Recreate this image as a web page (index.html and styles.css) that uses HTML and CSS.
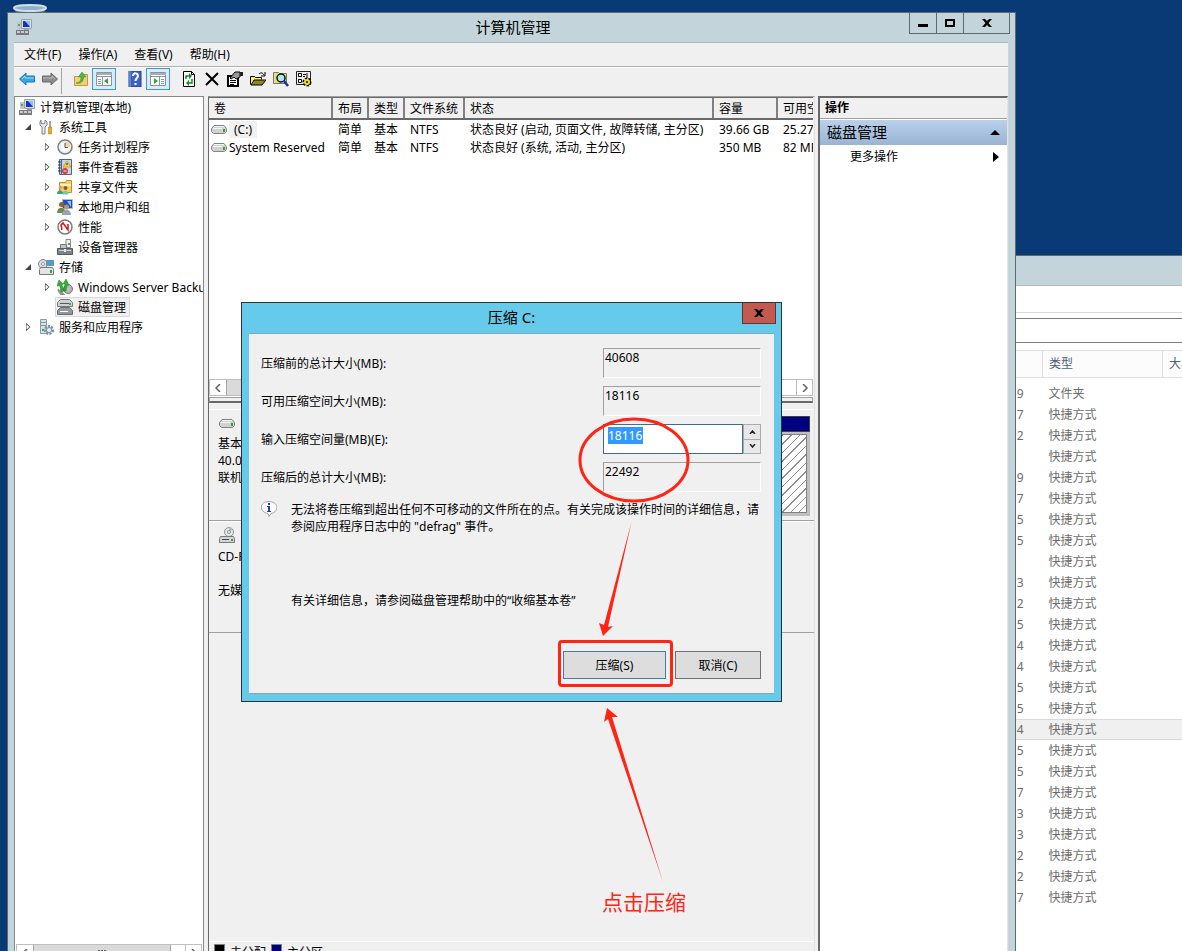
FILE: index.html
```
<!DOCTYPE html>
<html lang="zh-CN">

<head>
  <meta charset="UTF-8">
  <meta name="viewport" content="width=device-width, initial-scale=1.0">
  <title>计算机管理</title>
  <link rel="stylesheet" href="styles.css">
</head>

<body>
  <!-- shared icons -->
  <svg class="sprite" aria-hidden="true">
    <symbol id="i-computer" viewBox="0 0 16 16">
      <path d="M5 0h11v10H5z" fill="#d9dde2" />
      <path d="M5.500.5h10v9h-10z" fill="none" stroke="#9aa2aa" />
      <path d="M7 2h7v6H7z" fill="#1437b8" />
      <path d="M9 2h5v6z" fill="#8fc0f5" />
      <path d="M1 3h4v7H1z" fill="#c3c7cb" />
      <path d="M2 5h2v2H2z" fill="#37b34a" />
      <path d="M8 10h5v1H8z" fill="#9aa2aa" />
      <path d="M0 11h13v5H0z" fill="#77797c" />
      <path d="M1 12h3v2H1zM5 12h3v2H5zM9 12h3v2H9z" fill="#c9cbcd" />
    </symbol>
    <symbol id="i-tools" viewBox="0 0 16 16">
      <path d="M3 1v3l2 1 2-1V1l2 2v3L7 8v7H4V8L2 6V3z" fill="#e8eaec" stroke="#7c8085" />
      <path d="M12 2v6" stroke="#85898d" stroke-width="1.500" />
      <path d="M10.500 8h3v7h-3z" fill="#f1ad18" stroke="#a86c05" stroke-width=".5" />
    </symbol>
    <symbol id="i-clock" viewBox="0 0 16 16">
      <circle cx="8" cy="8" r="7" fill="#e7edf3" stroke="#7d8288" stroke-width="1.500" />
      <circle cx="8" cy="8" r="5" fill="#f8fafc" />
      <path d="M8 8V2.500A5.500 5.500 0 0 1 13.500 8z" fill="#f6d59b" />
      <path d="M8 4v4.500h3" fill="none" stroke="#555" />
    </symbol>
    <symbol id="i-event" viewBox="0 0 16 16">
      <path d="M2.500.5h12v15h-12z" fill="#c4d5ec" stroke="#4d6288" />
      <path d="M4.500 1v14" stroke="#4d6288" />
      <path d="M1 3h3M1 6h3M1 9h3M1 12h3" stroke="#333" />
      <path d="M10 2l4 6H6z" fill="#ffd21f" stroke="#a67d00" stroke-width=".5" />
      <path d="M10 4v2" stroke="#222" />
      <circle cx="8" cy="12" r="3" fill="#dc3b3b" />
      <path d="M6.500 12h3" stroke="#fff" />
    </symbol>
    <symbol id="i-share" viewBox="0 0 16 16">
      <path d="M2.500 3.500h6l1-2h5v12h-12z" fill="#f5cf68" stroke="#bd8f2a" />
      <path d="M3 5h11v2H3z" fill="#fff0b8" />
      <circle cx="3.500" cy="8.500" r="2" fill="#d8a177" />
      <circle cx="8.500" cy="9" r="2" fill="#8b5a33" />
      <path d="M0 15c0-5 6-5 6 0z" fill="#37a374" />
      <path d="M5.500 15.500c0-5 6-5 6 0z" fill="#78c4ae" />
    </symbol>
    <symbol id="i-users" viewBox="0 0 16 16">
      <path d="M5.500.5h10v9h-10z" fill="#1d50c8" stroke="#b4bcc4" />
      <path d="M10 2h4v6z" fill="#93c2f6" />
      <circle cx="4.500" cy="5.500" r="2.500" fill="#8a6534" />
      <circle cx="9.500" cy="8" r="2.500" fill="#c98f62" />
      <path d="M0 14c0-7 8-7 9 0z" fill="#6f8b4c" />
      <path d="M5 16c0-7 9-7 9 0z" fill="#8fa3c2" />
    </symbol>
    <symbol id="i-perf" viewBox="0 0 16 16">
      <circle cx="8" cy="8" r="7" fill="#fff" stroke="#77797b" stroke-width="1.500" />
      <path d="M5 11L4 6l2-2 5 7V5" fill="none" stroke="#d01818" stroke-width="1.500" />
    </symbol>
    <symbol id="i-device" viewBox="0 0 16 16">
      <path d="M9 .5h4.500v8H9z" fill="#eee" stroke="#888" />
      <path d="M11 4h2v2h-2z" fill="#38b44a" />
      <path d="M3.500 5.500h6v4h-6z" fill="#c0c4c8" stroke="#777" />
      <path d="M.5 9.500h15v6H.5z" fill="#7c8389" stroke="#565b60" />
      <path d="M2 11.500h12" stroke="#cfd3d6" />
      <path d="M7 10h2v3H7z" fill="#e8eaeb" />
    </symbol>
    <symbol id="i-storage" viewBox="0 0 16 16">
      <circle cx="5" cy="5" r="4.500" fill="#d8dcdf" stroke="#888" />
      <circle cx="5" cy="5" r="1.500" fill="#fff" stroke="#999" />
      <path d="M8.500 1.500h7v5h-7z" fill="#39a9dd" stroke="#7a8a92" />
      <path d="M2.500 8.500h12l1 2v5h-14v-5z" fill="#e2e4e6" stroke="#777" />
      <path d="M12 11h2v3h-2z" fill="#2faa35" />
    </symbol>
    <symbol id="i-backup" viewBox="0 0 16 16">
      <circle cx="11" cy="10" r="4.500" fill="#b9b4b9" stroke="#77727a" />
      <circle cx="11" cy="10" r="1.500" fill="#e7b5b0" />
      <path d="M1 10l4 3 3 3H4l-3-4z" fill="#999" stroke="#666" stroke-width=".5" />
      <path d="M4 13L3 7 0 7l2-6 4 4-1 1 2 6zM7 12L8 5H6l3-5 3 6h-2l-1 6z" fill="#34b233" stroke="#157a1a" stroke-width=".5" />
    </symbol>
    <symbol id="i-disks" viewBox="0 0 16 16">
      <path d="M3.500.5h9l3 3v4H.5v-4z" fill="#ced1d3" stroke="#77797b" />
      <path d="M3 4.500h9" stroke="#555" />
      <path d="M12 4h2v2h-2z" fill="#2fbe35" />
      <path d="M3.500 8.500h9l3 3v4H.5v-4z" fill="#95989a" stroke="#696b6d" />
      <path d="M3 12.500h8" stroke="#fff" />
    </symbol>
    <symbol id="i-services" viewBox="0 0 16 16">
      <path d="M2.500.5h6v14h-6z" fill="#d9e0e5" stroke="#8d989f" />
      <path d="M3 3.500h5M3 6.500h5" stroke="#8396a3" />
      <path d="M4 10h2v2H4z" fill="#35b13a" />
      <circle cx="11" cy="11" r="3.500" fill="none" stroke="#7992ab" stroke-width="3" stroke-dasharray="2 1" />
      <circle cx="11" cy="11" r="2.500" fill="#eef3f7" stroke="#7992ab" />
    </symbol>
    <symbol id="i-drive" viewBox="0 0 16 9">
      <path d="M3 .5h10l2.500 3v3l-2 2h-11l-2-2v-3z" fill="#cfd1d3" stroke="#808386" />
      <path d="M3 1.500h10M2 3.500h9" stroke="#f6f7f7" />
      <path d="M12 4h2v3h-2z" fill="#28a832" />
    </symbol>
    <symbol id="i-cd" viewBox="0 0 16 16">
      <circle cx="10" cy="5" r="4.500" fill="#e5e6e7" stroke="#8c8e90" />
      <path d="M10 0v5l4-3" fill="#b7bcc0" />
      <circle cx="10" cy="5" r="1.500" fill="#fff" stroke="#888" />
      <path d="M1.500 9.500h13l1 2v4H.5v-4z" fill="#d2d4d6" stroke="#77797b" />
      <path d="M3 12.500h7" stroke="#444" />
      <path d="M12 12h2v2h-2z" fill="#28a832" />
    </symbol>
    <symbol id="i-pane" viewBox="0 0 18 16">
      <path d="M1.500 1.500h15v13h-15z" fill="#fff" stroke="#8b949c" />
      <path d="M1 2h16v2H1z" fill="#a5adb5" />
      <path d="M1 5.500h16M7.500 6v8" stroke="#8b949c" />
      <path d="M3 8.500h3M3 10.500h3M3 12.500h3" stroke="#6c9fd2" />
      <path d="M13 7v6l-4-3z" fill="#31a536" />
    </symbol>
  </svg>

  <svg class="recycle-bin" viewBox="0 0 36 9" aria-hidden="true">
    <path d="M2 4l2 5h28l2-5z" fill="#547a9c" />
    <ellipse cx="18" cy="4" rx="16" ry="3" fill="#8fb0c8" stroke="#d4dee5" stroke-width="2" />
  </svg>

  <!-- file explorer behind -->
  <section class="explorer">
    <div class="explorer-title"></div>
    <div class="explorer-menu"></div>
    <div class="explorer-address"></div>
    <table class="explorer-files">
      <thead>
        <tr><th class="col-date"></th><th class="col-type">类型</th><th class="col-size">大小</th></tr>
      </thead>
      <tbody>
        <tr><td>9</td><td>文件夹</td><td></td></tr>
        <tr><td>7</td><td>快捷方式</td><td></td></tr>
        <tr><td>2</td><td>快捷方式</td><td></td></tr>
        <tr><td></td><td>快捷方式</td><td></td></tr>
        <tr><td>9</td><td>快捷方式</td><td></td></tr>
        <tr><td>7</td><td>快捷方式</td><td></td></tr>
        <tr><td>5</td><td>快捷方式</td><td></td></tr>
        <tr><td>5</td><td>快捷方式</td><td></td></tr>
        <tr><td></td><td>快捷方式</td><td></td></tr>
        <tr><td>3</td><td>快捷方式</td><td></td></tr>
        <tr><td>2</td><td>快捷方式</td><td></td></tr>
        <tr><td>5</td><td>快捷方式</td><td></td></tr>
        <tr><td>4</td><td>快捷方式</td><td></td></tr>
        <tr><td>4</td><td>快捷方式</td><td></td></tr>
        <tr><td>5</td><td>快捷方式</td><td></td></tr>
        <tr><td>5</td><td>快捷方式</td><td></td></tr>
        <tr class="active"><td>4</td><td>快捷方式</td><td></td></tr>
        <tr><td>5</td><td>快捷方式</td><td></td></tr>
        <tr><td>5</td><td>快捷方式</td><td></td></tr>
        <tr><td>7</td><td>快捷方式</td><td></td></tr>
        <tr><td>3</td><td>快捷方式</td><td></td></tr>
        <tr><td>3</td><td>快捷方式</td><td></td></tr>
        <tr><td>2</td><td>快捷方式</td><td></td></tr>
        <tr><td>2</td><td>快捷方式</td><td></td></tr>
        <tr><td>7</td><td>快捷方式</td><td></td></tr>
      </tbody>
    </table>
  </section>

  <!-- computer management -->
  <main class="manager">
    <header class="titlebar">
      <svg class="icon"><use href="#i-computer" /></svg>
      <h1>计算机管理</h1>
      <div class="window-controls">
        <button class="minimize" aria-label="最小化"><svg width="10" height="10"><path d="M0 6h10v3H0z" /></svg></button>
        <button class="maximize" aria-label="最大化"><svg width="10" height="10"><path d="M0 1h10v8H0zM2 3v4h6V3z" fill-rule="evenodd" /></svg></button>
        <button class="close" aria-label="关闭"><svg width="10" height="10"><path d="M0 1h3l2 2 2-2h3L6.500 5 10 9H7L5 7 3 9H0l3.500-4z" /></svg></button>
      </div>
    </header>
    <div class="manager-body">
      <nav class="menubar">
        <button>文件(F)</button>
        <button>操作(A)</button>
        <button>查看(V)</button>
        <button>帮助(H)</button>
      </nav>
      <div class="toolbar">
        <div class="tool-group">
          <button aria-label="后退"><svg viewBox="0 0 16 16"><path d="M.5 8L7 2v3h8.500v6H7v3z" fill="#35a7e3" stroke="#1876bd" /><path d="M3 8l3-3v2h9" fill="none" stroke="#9bdcf8" /></svg></button>
          <button aria-label="前进"><svg viewBox="0 0 16 16"><path d="M15.500 8L9 2v3H.5v6H9v3z" fill="#8d8d8d" stroke="#686868" /><path d="M1 7h9V5l3 3" fill="none" stroke="#bbb" /></svg></button>
        </div>
        <div class="tool-group">
          <button aria-label="向上"><svg viewBox="0 0 16 16"><path d="M1.500 5.500h5l1-2h7v11h-13z" fill="#f3d078" stroke="#c9983b" /><path d="M3 12c4 0 5-3 5-6H5.500L9 1l4 5h-2.500c0 5-3 7-7.500 6z" fill="#4bb944" stroke="#2b8930" stroke-width=".5" /></svg></button>
          <button class="pressed" aria-label="显示控制台树"><svg viewBox="0 0 18 16"><use href="#i-pane" /></svg></button>
        </div>
        <div class="tool-group">
          <button aria-label="帮助"><svg viewBox="0 0 16 16"><path d="M2 0h12v16H2z" fill="#3c62c5" stroke="#263f87" /><path d="M3 0v16" stroke="#8ba5e6" /><path d="M6 5c0-4 5-3 5 0 0 2-2.500 2-2.500 5M8.500 12v2" fill="none" stroke="#fff" stroke-width="2" /></svg></button>
          <button class="pressed" aria-label="显示操作窗格"><svg class="flip" viewBox="0 0 18 16"><use href="#i-pane" /></svg></button>
        </div>
        <div class="tool-group">
          <button aria-label="刷新"><svg viewBox="0 0 16 16"><path d="M2.500.5h8l3 3v12h-11z" fill="#fff" stroke="#000" /><path d="M10.500.5v3h3" fill="none" stroke="#000" /><path d="M5 8V5h4M11 8v4H7" fill="none" stroke="#108a28" stroke-width="1.500" /><path d="M8 2v6l3-3zM8 9v6l-3-3z" fill="#108a28" /></svg></button>
          <button aria-label="删除"><svg viewBox="0 0 16 16"><path d="M2 2l12 12M14 2L2 14" stroke="#000" stroke-width="2" /></svg></button>
          <button aria-label="属性"><svg viewBox="0 0 16 16"><path d="M1 5h10v10H1z" fill="#fff" stroke="#000" stroke-width="2" /><path d="M3 9.500h6M3 11.500h6M3 13.500h4" stroke="#000" /><path d="M3 7l5-6h5v5L9 8 7 6 4 8z" fill="#999" stroke="#000" /><path d="M13 1h3v4h-3z" fill="#222" /></svg></button>
          <button aria-label="打开"><svg viewBox="0 0 16 16"><path d="M.5 13.500v-8h4l1 1h6v2" fill="#fff46b" stroke="#000" /><path d="M1 14l3-5h12l-4 5z" fill="#8e8a18" stroke="#000" /><path d="M9 3c2-2 4-1 5 1M15 1v4h-4" fill="none" stroke="#000" /></svg></button>
          <button aria-label="查找"><svg viewBox="0 0 16 16"><path d="M.5 1.500h5l1 1h7v10H.5z" fill="#ecdf72" stroke="#777" /><circle cx="8" cy="7" r="4" fill="#a4edf4" stroke="#111" stroke-width="1.500" /><path d="M11 10l4 5" stroke="#1731a9" stroke-width="2.500" /></svg></button>
          <button aria-label="设置"><svg viewBox="0 0 16 16"><path d="M.5.5h14v13H.5z" fill="#eee" stroke="#222" /><path d="M2.500 2.500h3v3h-3zM2.500 8.500h3v3h-3z" fill="#fff" stroke="#000" /><path d="M7 3.500h3M7 5.500h2M11 2v5M7 9.500h2" stroke="#000" /><circle cx="11" cy="11" r="3" fill="none" stroke="#000" stroke-dasharray="2 1" stroke-width="3" /><circle cx="11" cy="11" r="3" fill="#f5df12" /><circle cx="11" cy="11" r="1" /></svg></button>
        </div>
      </div>

      <div class="panes">
        <aside class="tree-pane">
          <ul class="tree">
            <li class="root"><svg class="icon"><use href="#i-computer" /></svg><span>计算机管理(本地)</span></li>
            <li class="branch open"><i></i><svg class="icon"><use href="#i-tools" /></svg><span>系统工具</span></li>
            <li class="leaf closed"><i></i><svg class="icon"><use href="#i-clock" /></svg><span>任务计划程序</span></li>
            <li class="leaf closed"><i></i><svg class="icon"><use href="#i-event" /></svg><span>事件查看器</span></li>
            <li class="leaf closed"><i></i><svg class="icon"><use href="#i-share" /></svg><span>共享文件夹</span></li>
            <li class="leaf closed"><i></i><svg class="icon"><use href="#i-users" /></svg><span>本地用户和组</span></li>
            <li class="leaf closed"><i></i><svg class="icon"><use href="#i-perf" /></svg><span>性能</span></li>
            <li class="leaf"><i></i><svg class="icon"><use href="#i-device" /></svg><span>设备管理器</span></li>
            <li class="branch open"><i></i><svg class="icon"><use href="#i-storage" /></svg><span>存储</span></li>
            <li class="leaf closed"><i></i><svg class="icon"><use href="#i-backup" /></svg><span>Windows Server Backup</span></li>
            <li class="leaf"><i></i><div class="selected"><svg class="icon"><use href="#i-disks" /></svg><span>磁盘管理</span></div></li>
            <li class="branch closed"><i></i><svg class="icon"><use href="#i-services" /></svg><span>服务和应用程序</span></li>
          </ul>
          <div class="scrollbar">
            <button aria-label="向左滚动"><svg width="6" height="8"><path d="M5 0L1 4l4 4" /></svg></button>
            <div class="thumb"><b></b><b></b><b></b></div>
            <button aria-label="向右滚动"><svg width="6" height="8"><path d="M1 0l4 4-4 4" /></svg></button>
          </div>
        </aside>

        <section class="disk-pane">
          <div class="volumes">
            <table class="volume-table">
              <thead>
                <tr>
                  <th class="col-volume">卷</th>
                  <th class="col-short">布局</th>
                  <th class="col-short">类型</th>
                  <th class="col-fs">文件系统</th>
                  <th class="col-status">状态</th>
                  <th class="col-capacity">容量</th>
                  <th>可用空间</th>
                </tr>
              </thead>
              <tbody>
                <tr>
                  <td class="volume"><svg class="drive"><use href="#i-drive" /></svg><span class="current">(C:)</span></td>
                  <td>简单</td><td>基本</td><td>NTFS</td>
                  <td>状态良好 (启动, 页面文件, 故障转储, 主分区)</td>
                  <td>39.66 GB</td><td>25.27 GB</td>
                </tr>
                <tr>
                  <td class="volume"><svg class="drive"><use href="#i-drive" /></svg><span>System Reserved</span></td>
                  <td>简单</td><td>基本</td><td>NTFS</td>
                  <td>状态良好 (系统, 活动, 主分区)</td>
                  <td>350 MB</td><td>82 MB</td>
                </tr>
              </tbody>
            </table>
            <div class="scrollbar">
              <button aria-label="向左滚动"><svg width="6" height="8"><path d="M5 0L1 4l4 4" /></svg></button>
              <div class="thumb"></div>
              <button aria-label="向右滚动"><svg width="6" height="8"><path d="M1 0l4 4-4 4" /></svg></button>
            </div>
          </div>
          <div class="splitter"></div>
          <div class="disks">
            <div class="disk">
              <div class="disk-label">
                <svg class="drive"><use href="#i-drive" /></svg>
                <p>基本<br>40.00 GB<br>联机</p>
              </div>
              <div class="partitions">
                <div class="partition-bar"></div>
                <div class="partition-body"></div>
              </div>
            </div>
            <div class="disk">
              <div class="disk-label">
                <svg class="icon"><use href="#i-cd" /></svg>
                <p>CD-ROM 0<br><br>无媒体</p>
              </div>
            </div>
          </div>
          <div class="legend">
            <span class="swatch unallocated"></span>未分配
            <span class="swatch primary"></span>主分区
          </div>
        </section>

        <aside class="actions-pane">
          <h2>操作</h2>
          <div class="action-group">磁盘管理<svg width="10" height="5"><path d="M5 0l5 5H0z" /></svg></div>
          <button class="action">更多操作<svg width="6" height="10"><path d="M0 0l6 5-6 5z" /></svg></button>
        </aside>
      </div>
    </div>
  </main>

  <!-- shrink dialog -->
  <form class="dialog" onsubmit="return false">
    <header class="dialog-title">
      <h2>压缩 C:</h2>
      <button type="button" class="dialog-close" aria-label="关闭"><svg width="10" height="10"><path d="M0 1h3l2 2 2-2h3L6.500 5 10 9H7L5 7 3 9H0l3.500-4z" /></svg></button>
    </header>
    <div class="dialog-body">
      <div class="fields">
        <label for="total-before">压缩前的总计大小(MB):</label>
        <output id="total-before">40608</output>
        <label for="available">可用压缩空间大小(MB):</label>
        <output id="available">18116</output>
        <label for="amount">输入压缩空间量(MB)(E):</label>
        <div class="spinner">
          <input type="text" id="amount" value="18116">
          <div class="spinner-buttons">
            <button type="button" aria-label="增加"><svg width="7" height="4"><path d="M1 4l2.500-3L6 4" /></svg></button>
            <button type="button" aria-label="减少"><svg width="7" height="4"><path d="M1 0l2.500 3L6 0" /></svg></button>
          </div>
        </div>
        <label for="total-after">压缩后的总计大小(MB):</label>
        <output id="total-after">22492</output>
      </div>
      <div class="note">
        <svg width="16" height="16" viewBox="0 0 16 16" aria-hidden="true">
          <path d="M8 .5c10 0 10 11 2 12L8 15.500 7 12.500C-2 11-2 .5 8 .5z" fill="#fdfdfd" stroke="#a2a5a8" />
          <path d="M7 2h2v2H7zM6 5h3v5h1v1H6v-1h1V6H6z" fill="#1b3fb5" />
        </svg>
        <p>无法将卷压缩到超出任何不可移动的文件所在的点。有关完成该操作时间的详细信息，请参阅应用程序日志中的 "defrag" 事件。</p>
      </div>
      <p class="help-text">有关详细信息，请参阅磁盘管理帮助中的“收缩基本卷”</p>
      <div class="dialog-actions">
        <button type="submit" class="primary-button">压缩(S)</button>
        <button type="button">取消(C)</button>
      </div>
    </div>
  </form>

  <!-- red callouts -->
  <svg class="callouts" width="140" height="480" viewBox="560 410 140 480" aria-hidden="true">
    <ellipse cx="634" cy="460" rx="54" ry="41" fill="none" stroke="#ff2414" stroke-width="3" />
    <path d="M631.500 522L608 627l5-1-10 10-4-13 5 2z" fill="#ff2414" />
    <path d="M607 708l11 9-6 0 51 165-55-163-4 3z" fill="#ff2414" />
  </svg>
  <div class="callout-box"></div>
  <p class="callout-text">点击压缩</p>
</body>

</html>
```
FILE: styles.css
```
* {
  box-sizing: border-box;
}

body {
  position: relative;
  margin: 0;
  height: 100vh;
  overflow: hidden;
  background-color: #0a3a75;
  color: #000;
  font-family: "Noto Sans", "Noto Sans CJK SC", sans-serif;
  font-size: 12px;
  line-height: 17px;
}

h1, h2, p, ul {
  margin: 0;
  padding: 0;
  font-weight: normal;
}

button {
  margin: 0;
  padding: 0;
  border: 0;
  background: none;
  color: inherit;
  font: inherit;
}

svg {
  display: block;
  flex: none;
}

table {
  border-collapse: collapse;
  table-layout: fixed;
}

th {
  font-weight: normal;
  text-align: left;
  white-space: nowrap;
}

.sprite {
  position: absolute;
  width: 0;
  height: 0;
}

.icon {
  width: 16px;
  height: 16px;
}

.drive {
  width: 16px;
  height: 9px;
}

.recycle-bin {
  position: absolute;
  left: 12px;
  top: 4px;
  width: 36px;
  height: 9px;
}

/* explorer */
.explorer {
  position: absolute;
  top: 255px;
  right: 0;
  bottom: 0;
  left: 860px;
  overflow: hidden;
  border-top: 1px solid #5f6a70;
  background-color: #fff;
  color: #6d6d6d;
}

.explorer-title {
  height: 30px;
  border-bottom: 1px solid #acb9c1;
  background-color: #c3d5da;
}

.explorer-menu {
  height: 27px;
  border-bottom: 1px solid #dadbdc;
}

.explorer-address {
  height: 25px;
  margin: 5px 0 7px;
  border: solid #7a7a7a;
  border-width: 1px 0;
}

.explorer-files {
  width: 400px;

  th {
    height: 27px;
    padding: 0 6px 2px;
    border: 1px solid #e0e0e0;
    background-color: #fcfcfc;
    color: #4c607a;
  }

  td {
    height: 21px;
    padding: 0 6px;
  }

  td:first-child {
    padding-right: 19px;
    text-align: right;
  }

  tbody::before {
    content: "";
    display: block;
    height: 5px;
  }

  .active {
    background-color: #f0f0f0;
    outline: 1px solid #dadada;
    outline-offset: -1px;
  }
}

.col-date {
  width: 182px;
}

.col-type {
  width: 120px;
}

/* management window */
.manager {
  position: absolute;
  top: 12px;
  right: 166px;
  bottom: -13px;
  left: 7px;
  display: flex;
  flex-direction: column;
  border: 1px solid #5f6a70;
  background-color: #c3d5da;
}

.titlebar {
  display: grid;
  grid-template-columns: 1fr auto 1fr;
  align-items: center;
  height: 29px;
  padding: 0 5px 2px 8px;

  h1 {
    font-size: 15px;
    line-height: 20px;
  }
}

.window-controls {
  display: flex;
  justify-self: end;
  align-self: start;
  border: 1px solid #5f6a70;
  border-top: 0;

  button {
    display: flex;
    align-items: center;
    justify-content: center;
    width: 27px;
    height: 20px;
    border-right: 1px solid #5f6a70;
  }

  .close {
    width: 45px;
    border-right: 0;
  }
}

.manager-body {
  flex: 1;
  display: flex;
  flex-direction: column;
  min-height: 0;
  margin: 0 7px 0 6px;
  border-top: 1px solid #acb9c1;
  background-color: #f0f0f0;
}

.menubar {
  display: flex;
  gap: 1px;
  height: 24px;
  padding-left: 2px;
  border-bottom: 1px solid #b0b0b0;

  button {
    padding: 0 8px;
  }
}

.toolbar {
  display: flex;
  gap: 7px;
  height: 29px;
  padding: 0 1px 2px;
  border-top: 1px solid #fff;

  button {
    display: flex;
    align-items: center;
    justify-content: center;
    width: 23px;
    height: 22px;
  }

  svg {
    width: 16px;
    height: 16px;
  }

  .pressed {
    width: 24px;
    border: 1px solid #3c9bd5;
    background-color: #dcebf7;
  }

  .pressed svg {
    width: 18px;
  }

  .flip {
    transform: scaleX(-1);
  }
}

.tool-group {
  display: flex;
}

.tool-group:first-child {
  border-right: 1px solid #a5a5a5;
}

.panes {
  flex: 1;
  display: flex;
  min-height: 0;
}

.tree-pane {
  display: flex;
  flex-direction: column;
  justify-content: space-between;
  width: 190px;
  margin-right: 4px;
  padding: 0 1px 1px;
  overflow: hidden;
  border: 1px solid #828790;
  background-color: #fff;
}

.tree {
  list-style: none;

  li {
    display: flex;
    align-items: center;
    gap: 4px;
    height: 20px;
    white-space: nowrap;
  }

  i {
    flex: none;
    display: flex;
    justify-content: center;
    width: 12px;
  }

  span {
    margin-left: 1px;
  }

  .root {
    padding-left: 3px;
  }

  .branch {
    padding-left: 6px;
  }

  .leaf {
    padding-left: 25px;
  }

  .closed i::before {
    content: "";
    width: 5px;
    height: 9px;
    background-color: #444;
    clip-path: polygon(0 0, 100% 50%, 0 100%, 0 0, 1px 2px, 1px 7px, 4px 50%, 1px 2px);
  }

  .open i::before {
    content: "";
    width: 6px;
    height: 6px;
    background-color: #444;
    clip-path: polygon(100% 0, 100% 100%, 0 100%);
  }
}

.selected {
  display: flex;
  align-items: center;
  gap: 4px;
  height: 20px;
  margin-left: -2px;
  padding: 0 3px 0 1px;
  border: 1px solid #d9d9d9;
  background-color: #f0f0f0;
}

.scrollbar {
  display: flex;
  height: 17px;
  border: 1px solid #bfbfbf;
  background-color: #fff;

  button {
    display: flex;
    align-items: center;
    justify-content: center;
    width: 16px;
  }

  path {
    fill: none;
    stroke: #606060;
    stroke-width: 1.5;
  }

  .thumb {
    flex: 1;
    display: flex;
    align-items: center;
    justify-content: center;
    gap: 1px;
    margin-right: 14px;
    border: solid #a6a6a6;
    border-width: 0 1px;
    background-color: #dadada;
  }

  b {
    width: 2px;
    height: 6px;
    background-color: #606060;
  }

  button:last-child {
    border-left: 1px solid #bfbfbf;
  }
}

.disk-pane {
  flex: 1;
  display: flex;
  flex-direction: column;
  min-width: 0;
  border-top: 1px solid #a0a0a0;
  border-right: 1px solid #e3e3e3;
  border-left: 1px solid #696969;
}

.volumes {
  display: flex;
  flex-direction: column;
  justify-content: space-between;
  height: 300px;
  margin-right: 1px;
  overflow: hidden;
  border-top: 1px solid #696969;
  border-bottom: 1px solid #fff;
  background-color: #fff;
}

.volume-table {
  width: 660px;

  th {
    height: 21px;
    padding: 0 5px;
    border-right: 2px solid #808080;
    border-bottom: 2px solid #696969;
    background-color: #f0f0f0;
  }

  td {
    height: 18px;
    padding: 0 6px;
    white-space: nowrap;
  }

  .volume {
    display: flex;
    align-items: center;
    gap: 2px;
    padding: 0 2px;
  }

  .current {
    padding: 0 5px;
    background-color: #f0f0f0;
  }
}

.col-volume {
  width: 123px;
}

.col-short {
  width: 36px;
}

.col-fs {
  width: 60px;
}

.col-status {
  width: 249px;
}

.col-capacity {
  width: 64px;
}

.splitter {
  height: 6px;
  margin-right: 1px;
  border: 1px solid #a0a0a0;
  border-bottom: 2px solid #696969;
}

.disks {
  flex: 1;
  padding-top: 6px;
}

.disk {
  display: flex;
  height: 112px;
  border-top: 1px solid #fff;
  border-bottom: 1px solid #a0a0a0;
}

.disk-label {
  display: flex;
  flex-direction: column;
  gap: 7px;
  width: 90px;
  padding: 8px 9px 0;

  .drive {
    margin: 1px 1px 0;
  }

  .icon {
    margin: -3px 1px -2px;
  }
}

.partitions {
  flex: 1;
  display: flex;
  flex-direction: column;
  margin: 6px 4px 4px 0;
  padding: 0 3px 3px 0;
  background-color: #bfbfbf;
}

.partition-bar {
  height: 16px;
  margin-right: -3px;
  border: 1px solid #404040;
  background-color: #000080;
}

.partition-body {
  flex: 1;
  margin-top: 2px;
  border: 1px solid #808080;
  background: repeating-linear-gradient(135deg, #fff 0, #fff 5px, #909090 5px, #909090 6px);
}

.legend {
  display: flex;
  gap: 5px;
  height: 22px;
  padding: 2px 5px;
  border-top: 1px solid #fff;
}

.swatch {
  width: 11px;
  height: 11px;
  border: 1px solid #808080;
}

.unallocated {
  background-color: #000;
}

.primary {
  background-color: #000080;
}

.actions-pane {
  width: 190px;
  margin-left: 3px;
  border-top: 2px solid #696969;
  border-right: 1px solid #e3e3e3;
  border-left: 2px solid #696969;
  background-color: #fff;

  h2 {
    height: 21px;
    padding: 1px 5px;
    border-bottom: 1px solid #a0a0a0;
    background-color: #f0f0f0;
    font-size: 12px;
    font-weight: bold;
  }
}

.action-group {
  display: flex;
  align-items: center;
  justify-content: space-between;
  height: 25px;
  margin-top: 1px;
  padding: 0 7px;
  background: linear-gradient(#b9d1ea, #9ab4d3);
  font-size: 15px;
}

.action {
  display: flex;
  align-items: center;
  justify-content: space-between;
  width: 100%;
  height: 23px;
  padding: 0 8px 0 30px;
}

/* dialog */
.dialog {
  position: absolute;
  top: 302px;
  left: 241px;
  width: 541px;
  padding: 0 7px 7px;
  border: 1px solid #2b3338;
  background-color: #66caea;
}

.dialog-title {
  display: flex;
  align-items: center;
  justify-content: center;
  height: 30px;
  padding-bottom: 2px;

  h2 {
    font-size: 15px;
    line-height: 20px;
  }
}

.dialog-close {
  position: absolute;
  top: 0;
  right: 5px;
  display: flex;
  align-items: center;
  justify-content: center;
  width: 34px;
  height: 21px;
  border: 1px solid #5b3737;
  border-top: 0;
  background-color: #c35a50;
}

.dialog-body {
  padding: 14px 13px 14px 12px;
  border-top: 1px solid #82a9bb;
  border-bottom: 1px solid #82a9bb;
  background-color: #f0f0f0;
}

.fields {
  display: grid;
  grid-template-columns: 1fr 158px;
  row-gap: 8px;
  align-items: center;

  output {
    height: 30px;
    padding-left: 1px;
    border: 1px solid;
    border-color: #a0a0a0 #fff #fff #a0a0a0;
  }
}

.spinner {
  display: flex;
  height: 30px;

  input {
    flex: 1;
    min-width: 0;
    padding: 2px 4px 10px;
    border: 1px solid #3c6d98;
    outline: 0;
    border-radius: 0;
    /* highlighted value */
    background: linear-gradient(#3399ff, #3399ff) 4px 2px / 35px 17px no-repeat #fff;
    color: #fff;
    font: inherit;
  }
}

.spinner-buttons {
  display: flex;
  flex-direction: column;
  width: 18px;
  border: 1px solid #acacac;
  background-color: #e8e8e8;

  button {
    flex: 1;
    display: flex;
    align-items: center;
    justify-content: center;
  }

  button:first-child {
    border-bottom: 1px solid #acacac;
  }

  path {
    fill: none;
    stroke: #222;
    stroke-width: 1.5;
  }
}

.note {
  display: flex;
  gap: 14px;
  margin-top: 9px;

  p {
    width: 471px;
    flex: none;
  }
}

.help-text {
  margin: 57px 0 0 30px;
}

.dialog-actions {
  display: flex;
  justify-content: flex-end;
  gap: 9px;
  margin-top: 42px;

  button {
    width: 86px;
    height: 28px;
    border: 1px solid #707070;
    background-color: #ddd;
  }

  .primary-button {
    width: 103px;
    border-color: #3c7fb1;
  }
}

/* callouts */
.callouts {
  position: absolute;
  top: 410px;
  left: 560px;
  pointer-events: none;
}

.callout-box {
  position: absolute;
  top: 640px;
  left: 558px;
  width: 115px;
  height: 47px;
  border: 3px solid #ff2414;
  border-radius: 4px;
  pointer-events: none;
}

.callout-text {
  position: absolute;
  top: 887px;
  left: 602px;
  color: #ff2414;
  font-size: 21px;
  line-height: 30px;
}
```
